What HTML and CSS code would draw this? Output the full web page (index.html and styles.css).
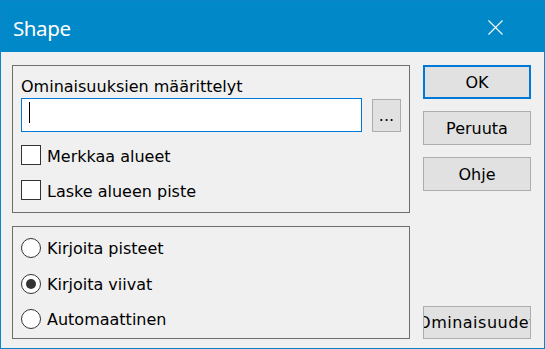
FILE: index.html
```html
<!DOCTYPE html>
<html lang="fi">

<head>
	<meta charset="UTF-8">
	<meta name="viewport" content="width=device-width, initial-scale=1.0">
	<title>Shape</title>

	<link rel="stylesheet" href="styles.css">
</head>

<body>
	<div class="dialog">
		<div class="titlebar">
			<span class="title">Shape</span>
			<svg class="close" width="15" height="15" viewBox="0 0 15 15">
				<path d="M0.5 0.5 L14.5 14.5 M14.5 0.5 L0.5 14.5" stroke="#fff" stroke-width="1.1" fill="none" />
			</svg>
		</div>

		<div class="content">
			<div class="left">
				<div class="group group--props">
					<div class="group__label">Ominaisuuksien määrittelyt</div>
					<div class="field-row">
						<div class="textbox"><span class="caret"></span></div>
						<button class="btn btn--browse" type="button">...</button>
					</div>
					<div class="checks">
						<div class="check-row">
							<span class="checkbox"></span>
							<span class="check-text">Merkkaa alueet</span>
						</div>
						<div class="check-row">
							<span class="checkbox"></span>
							<span class="check-text">Laske alueen piste</span>
						</div>
					</div>
				</div>

				<div class="group group--write">
					<div class="radio-row">
						<span class="radio"></span>
						<span class="radio-text">Kirjoita pisteet</span>
					</div>
					<div class="radio-row">
						<span class="radio radio--checked"></span>
						<span class="radio-text">Kirjoita viivat</span>
					</div>
					<div class="radio-row">
						<span class="radio"></span>
						<span class="radio-text">Automaattinen</span>
					</div>
				</div>
			</div>

			<div class="buttons">
				<button class="btn btn--default" type="button">OK</button>
				<button class="btn" type="button">Peruuta</button>
				<button class="btn" type="button">Ohje</button>
				<button class="btn btn--bottom" type="button"><span>Ominaisuudet</span></button>
			</div>
		</div>
	</div>
</body>

</html>
```

FILE: styles.css
```css
body {
	margin: 0;
	padding: 0;
	font-family: "DejaVu Sans", sans-serif;
	font-size: 16px;
	color: #000;
	background-color: #f0f0f0;
}

.dialog {
	width: 545px;
	height: 349px;
	box-sizing: border-box;
	border: 1px solid #0a86c8;
	background-color: #f0f0f0;
	display: flex;
	flex-direction: column;
}

.titlebar {
	height: 51px;
	flex-shrink: 0;
	background-color: #0088c9;
	display: flex;
	align-items: center;
	padding-left: 12px;
	padding-right: 41px;
}

.title {
	flex: 1;
	font-family: "Noto Sans", sans-serif;
	font-size: 20.5px;
	letter-spacing: -0.4px;
	color: #fff;
	padding-top: 2px;
}

.close {
	display: block;
	margin-top: 1px;
}

.content {
	flex: 1;
	display: flex;
	gap: 13px;
	padding: 13px 13px 9px 11px;
}

.left {
	width: 398px;
	display: flex;
	flex-direction: column;
	gap: 13px;
}

.group {
	box-sizing: border-box;
	border: 1px solid #6e6e6e;
}

.group--props {
	height: 148px;
	padding: 12px 8px 0 8px;
}

.group__label {
	line-height: 18px;
	height: 18px;
	margin-bottom: 2px;
}

.field-row {
	display: flex;
	align-items: flex-end;
	gap: 10px;
}

.textbox {
	flex: 1;
	height: 34px;
	box-sizing: border-box;
	border: 1px solid #0078d7;
	background-color: #fff;
	display: flex;
}

.caret {
	width: 1px;
	height: 21px;
	margin: 3px 0 0 7px;
	background-color: #000;
}

.checks {
	display: flex;
	flex-direction: column;
	gap: 15px;
	margin-top: 13px;
}

.check-row,
.radio-row {
	height: 20px;
	display: flex;
	align-items: flex-start;
	gap: 6px;
}

.checkbox {
	width: 20px;
	height: 20px;
	box-sizing: border-box;
	border: 1px solid #333;
	background-color: #fff;
}

.check-text {
	line-height: 20px;
	margin-top: 2px;
	white-space: nowrap;
}

.group--write {
	height: 113px;
	padding: 11px 8px 0 8px;
	display: flex;
	flex-direction: column;
	gap: 15.5px;
}

.radio {
	width: 20px;
	height: 20px;
	box-sizing: border-box;
	border: 1.4px solid #333;
	border-radius: 50%;
	background-color: #fff;
	display: flex;
	align-items: center;
	justify-content: center;
}

.radio--checked::after {
	content: "";
	width: 10px;
	height: 10px;
	border-radius: 50%;
	background-color: #333;
}

.radio-text {
	line-height: 20px;
	margin-top: 1px;
	white-space: nowrap;
}

.buttons {
	width: 108px;
	display: flex;
	flex-direction: column;
	gap: 12px;
}

.btn {
	font-family: "DejaVu Sans", sans-serif;
	font-size: 16px;
	color: #000;
	height: 34px;
	padding: 0;
	box-sizing: border-box;
	border: 1px solid #adadad;
	border-radius: 0;
	background-color: #e1e1e1;
	display: flex;
	align-items: center;
	justify-content: center;
	overflow: hidden;
	white-space: nowrap;
}

.btn--default {
	border: 2px solid #0078d7;
}

.btn--browse {
	width: 29px;
	height: 33px;
	flex-shrink: 0;
}

.btn--bottom {
	margin-top: auto;
	height: 33px;
}

/* the label is wider than the button, clipped on both sides */
.btn--bottom span {
	flex-shrink: 0;
	letter-spacing: 0.5px;
}
```
